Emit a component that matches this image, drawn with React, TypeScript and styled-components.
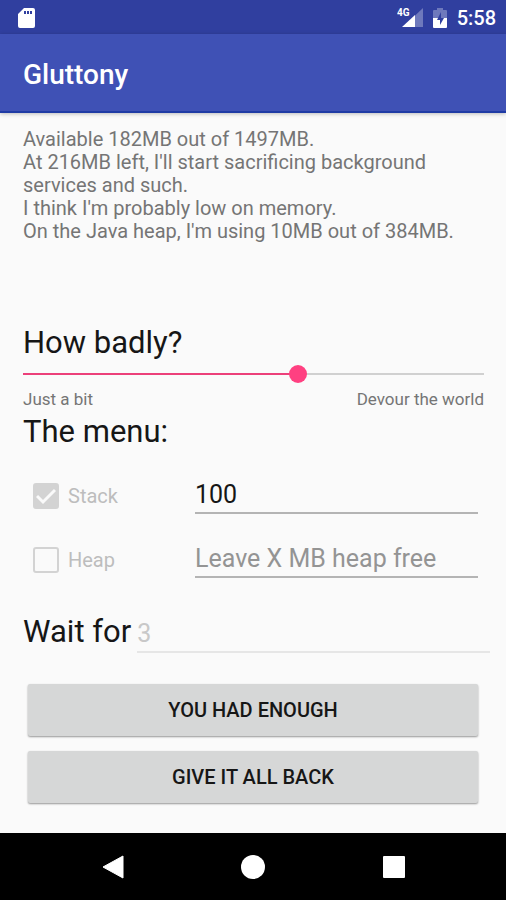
import React from 'react';
import styled, { createGlobalStyle } from 'styled-components';

const GlobalStyle = createGlobalStyle`
  * { box-sizing: border-box; }
  body { margin: 0; background: #fafafa; font-family: Roboto, sans-serif; color: #161616; }
`;

const Screen = styled.div`
  min-height: 100vh;
  display: flex;
  flex-direction: column;
`;

const StatusBar = styled.div`
  height: 34px;
  background: #303f9f;
  display: flex;
  align-items: center;
  justify-content: space-between;
  padding: 2px 10px 0 18px;
  color: #fff;
`;

const StatusIcons = styled.div`
  display: flex;
  align-items: center;
  gap: 10px;
`;

const Clock = styled.span`
  font-size: 20px;
  font-weight: 500;
  line-height: 24px;
`;

const AppBar = styled.header`
  height: 79px;
  background: #3f51b5;
  display: flex;
  align-items: center;
  padding: 4px 23px 0;
  border-bottom: 2px solid #1f3ba5;
  box-shadow: 0 1px 4px rgba(0, 0, 0, 0.25);
`;

const Title = styled.h1`
  margin: 0;
  color: #fff;
  font-size: 28px;
  font-weight: 500;
  line-height: 32px;
`;

const Content = styled.main`
  flex: 1;
  display: flex;
  flex-direction: column;
  padding: 15px 22px 28px 23px;
`;

const Report = styled.p`
  margin: 0 0 80px;
  min-height: 115px;
  color: #757575;
  font-size: 20px;
  line-height: 23px;
`;

const Line = styled.span`
  display: block;
`;

const Heading = styled.h2`
  margin: 0;
  font-size: 31px;
  font-weight: 400;
  line-height: 40px;
`;

const Slider = styled.input`
  appearance: none;
  display: block;
  width: 100%;
  height: 18px;
  margin: 2px 0 6px;
  background: linear-gradient(#ec407a, #ec407a) 0 8px / 60% 2px no-repeat,
    linear-gradient(#d0d0d0, #d0d0d0) 0 8px / 100% 2px no-repeat;

  &::-webkit-slider-thumb {
    appearance: none;
    width: 18px;
    height: 18px;
    border-radius: 50%;
    background: #ff4081;
  }
`;

const Scale = styled.div`
  display: flex;
  justify-content: space-between;
  margin-bottom: 3px;
  color: #757575;
  font-size: 17px;
  line-height: 20px;
`;

const Options = styled.div`
  display: grid;
  grid-template-columns: 172px 1fr;
  row-gap: 20px;
  padding-right: 6px;
  margin-top: 20px;
`;

const Option = styled.label`
  display: flex;
  align-items: center;
  gap: 9px;
  height: 44px;
  padding: 4px 0 0 10px;
  color: #bdbdbd;
  font-size: 20px;
`;

const Tick = styled.input`
  appearance: none;
  width: 26px;
  height: 26px;
  margin: 0;
  border: 2px solid #d3d3d3;
  border-radius: 3px;

  &:checked {
    background: #d3d3d3 url("data:image/svg+xml,%3Csvg xmlns='http://www.w3.org/2000/svg' viewBox='0 0 20 20'%3E%3Cpath d='M1 10l6 6L19 4' fill='none' stroke='%23fafafa' stroke-width='3'/%3E%3C/svg%3E") center / 20px no-repeat;
  }
`;

const Field = styled.input<{ $faint?: boolean }>`
  min-width: 0;
  width: 100%;
  height: 42px;
  padding: 4px 0 0;
  border: 0;
  border-bottom: 2px solid ${(p) => (p.$faint ? '#e6e6e6' : '#b4b4b4')};
  border-radius: 0;
  background: transparent;
  color: ${(p) => (p.$faint ? '#c8c8c8' : '#161616')};
  font: 400 25px Roboto, sans-serif;
  outline: 0;

  &::placeholder { color: #949494; opacity: 1; }
`;

const WaitRow = styled.label`
  display: flex;
  align-items: center;
  gap: 6px;
  margin: 31px -6px 0 0;
  font-size: 31px;
  line-height: 40px;
  white-space: nowrap;
`;

const Buttons = styled.div`
  display: flex;
  flex-direction: column;
  gap: 15px;
  padding: 31px 6px 0 5px;
`;

const Button = styled.button`
  height: 52px;
  border: 0;
  border-radius: 2px;
  background: #d6d7d7;
  color: #161616;
  font: 500 20px Roboto, sans-serif;
  box-shadow: 0 1px 2px rgba(0, 0, 0, 0.4);
`;

const NavBar = styled.nav`
  height: 67px;
  background: #000;
  display: flex;
  align-items: center;
  justify-content: center;
  gap: 100px;
`;

const NavButton = styled.button`
  width: 40px;
  height: 40px;
  padding: 0;
  border: 0;
  background: none;
`;

const report = [
  'Available 182MB out of 1497MB.',
  "At 216MB left, I'll start sacrificing background services and such.",
  "I think I'm probably low on memory.",
  "On the Java heap, I'm using 10MB out of 384MB.",
];

export default function App() {
  return (
    <Screen>
      <GlobalStyle />
      <StatusBar>
        <svg width="17" height="20" viewBox="0 0 17 20" aria-hidden="true">
          <path fill="#fff" fillRule="evenodd" d="M6 0h9a2 2 0 0 1 2 2v16a2 2 0 0 1-2 2H2a2 2 0 0 1-2-2V6zM6 3v3h2V3zm3 0v3h2V3zm3 0v3h2V3z" />
        </svg>
        <StatusIcons>
          <svg width="26" height="22" viewBox="0 0 26 22" aria-hidden="true">
            <path fill="#fff" fillOpacity="0.3" d="M26 1v19H6z" />
            <path fill="#fff" d="M18 8v12H5z" />
            <text x="0" y="9" fill="#fff" fontSize="10" fontWeight="700">4G</text>
          </svg>
          <svg width="14" height="22" viewBox="0 0 14 22" aria-hidden="true">
            <path fill="#fff" fillOpacity="0.3" d="M4 1h6v2h3a1 1 0 0 1 1 1v7H0V4a1 1 0 0 1 1-1h3z" />
            <path fill="#fff" d="M0 11h14v9a1 1 0 0 1-1 1H1a1 1 0 0 1-1-1z" />
            <path fill="#303f9f" d="M8 5l-4 8h3v5l4-7H8z" />
          </svg>
          <Clock>5:58</Clock>
        </StatusIcons>
      </StatusBar>
      <AppBar><Title>Gluttony</Title></AppBar>
      <Content>
        <Report>{report.map((line) => <Line key={line}>{line}</Line>)}</Report>
        <Heading as="label" htmlFor="severity">How badly?</Heading>
        <Slider id="severity" type="range" min="0" max="100" defaultValue="60" />
        <Scale><span>Just a bit</span><span>Devour the world</span></Scale>
        <Heading>The menu:</Heading>
        <Options>
          <Option><Tick type="checkbox" defaultChecked disabled />Stack</Option>
          <Field aria-label="Stack amount" defaultValue="100" />
          <Option><Tick type="checkbox" disabled />Heap</Option>
          <Field aria-label="Heap amount" placeholder="Leave X MB heap free" />
        </Options>
        <WaitRow>Wait for<Field $faint defaultValue="3" disabled /></WaitRow>
        <Buttons>
          <Button type="button">YOU HAD ENOUGH</Button>
          <Button type="button">GIVE IT ALL BACK</Button>
        </Buttons>
      </Content>
      <NavBar>
        <NavButton type="button" aria-label="Back">
          <svg width="40" height="40" viewBox="0 0 40 40"><path fill="#fff" stroke="#fff" strokeLinejoin="round" d="M30 9v22L10 20z" /></svg>
        </NavButton>
        <NavButton type="button" aria-label="Home">
          <svg width="40" height="40" viewBox="0 0 40 40"><circle cx="20" cy="20" r="12" fill="#fff" /></svg>
        </NavButton>
        <NavButton type="button" aria-label="Overview">
          <svg width="40" height="40" viewBox="0 0 40 40"><rect x="10" y="9" width="22" height="22" rx="1" fill="#fff" /></svg>
        </NavButton>
      </NavBar>
    </Screen>
  );
}
